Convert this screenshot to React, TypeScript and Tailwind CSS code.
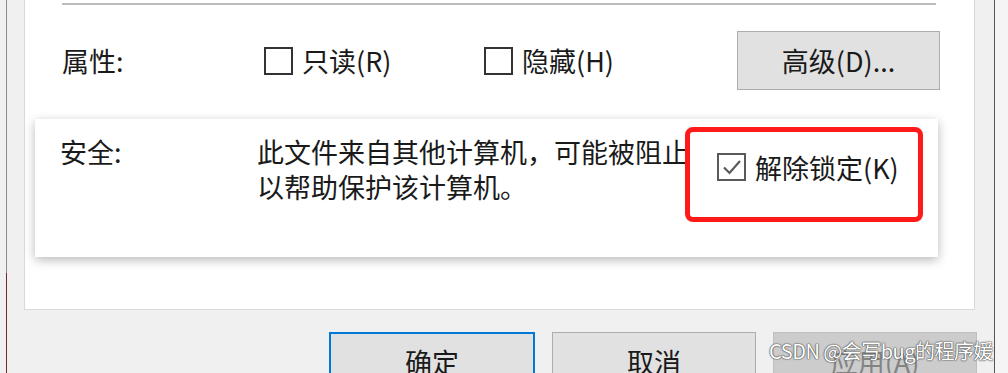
import React from 'react'

const font = "font-['Noto_Sans_CJK_SC','Noto_Sans',sans-serif]"

function Box({ checked = false }: { checked?: boolean }) {
  return (
    <span
      className={`inline-flex w-[29px] h-[28px] shrink-0 items-center justify-center border-2 bg-white ${
        checked ? 'border-[#5a5a5a]' : 'border-[#333333]'
      }`}
    >
      {checked && (
        <svg width="22" height="20" viewBox="0 0 22 20" fill="none">
          <path d="M3 10.5 L8.5 16 L19 4" stroke="#5a5a5a" strokeWidth="2.2" />
        </svg>
      )}
    </span>
  )
}

function Check({ label, checked }: { label: string; checked?: boolean }) {
  return (
    <div className="flex items-center gap-[9px]">
      <Box checked={checked} />
      <span className="leading-none whitespace-nowrap">{label}</span>
    </div>
  )
}

export default function App() {
  return (
    <div className={`relative w-[1008px] h-[373px] overflow-hidden bg-[#f0f0f0] text-[27px] text-[#1a1a1a] ${font}`}>
      <div className="flex h-full">
        <div className="w-[6px] bg-[#f0f0f0]" />
        <div className="flex w-[1px] flex-col">
          <div className="h-[273px] bg-[#8c8c8c]" />
          <div className="flex-1 bg-[#6e2b2b]" />
        </div>

        {/* dialog body */}
        <div className="flex w-[987px] flex-col">
          <div className="ml-[17px] h-[310px] w-[951px] shrink-0 border-x border-b border-[#d9d9d9] bg-white">
            <div className="ml-[37px] mt-[3px] h-[2px] w-[874px] bg-[#bdbdbd]" />

            {/* attributes */}
            <div className="mt-[26px] flex h-[59px] items-center pl-[37px]">
              <span className="w-[202px] leading-none">属性:</span>
              <div className="w-[220px]">
                <Check label="只读(R)" />
              </div>
              <div className="w-[253px]">
                <Check label="隐藏(H)" />
              </div>
              <button className="flex h-[59px] w-[203px] items-center justify-center border border-[#adadad] bg-[#e1e1e1] leading-none">
                高级(D)...
              </button>
            </div>

            {/* security card */}
            <div className="relative ml-[10px] mt-[29px] h-[138px] w-[903px] bg-white pt-[15px] shadow-[0_3px_10px_rgba(0,0,0,0.28)]">
              <div className="flex pl-[25px]">
                <span className="w-[197px] leading-[35px]">安全:</span>
                <div className="leading-[35px] whitespace-nowrap">
                  <div>此文件来自其他计算机，可能被阻止</div>
                  <div>以帮助保护该计算机。</div>
                </div>
              </div>
              <div className="absolute left-[650px] top-[8px] h-[95px] w-[238px] rounded-[8px] border-[5px] border-[#ff1a1a] bg-white pl-[27px] pt-[21px]">
                <Check label="解除锁定(K)" checked />
              </div>
            </div>
          </div>

          {/* dialog buttons */}
          <div className="ml-[322px] mt-[22px] flex shrink-0 gap-[17px]">
            <button className="flex h-[59px] w-[206px] items-center justify-center border-2 border-[#0078d7] bg-[#e1e1e1] leading-none">
              确定
            </button>
            <button className="flex h-[59px] w-[204px] items-center justify-center border border-[#adadad] bg-[#e1e1e1] leading-none">
              取消
            </button>
            <button className="flex h-[59px] w-[204px] items-center justify-center border border-[#bfbfbf] bg-[#cccccc] leading-none text-[#838383]">
              应用(A)
            </button>
          </div>
        </div>

        <div className="w-[1px] bg-[#555555]" />
        <div className="flex-1 bg-[#f5f5f5]" />
      </div>

      <div className="absolute left-[769px] top-[341px] text-[20px] leading-none tracking-[-0.5px] text-white [text-shadow:0_0_1px_#444,0_0_1px_#444,0_0_2px_#666]">
        CSDN @会写bug的程序媛
      </div>
    </div>
  )
}
